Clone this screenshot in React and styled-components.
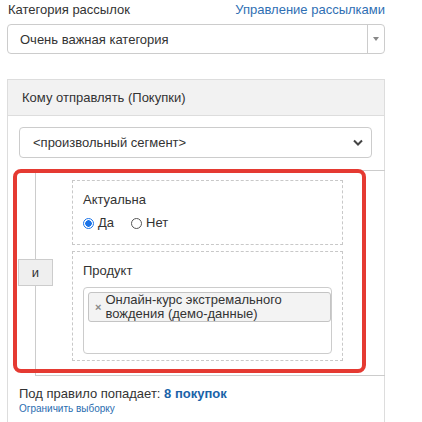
import styled, { createGlobalStyle } from 'styled-components';

const GlobalStyle = createGlobalStyle`
  body {
    margin: 0;
    background: #fff;
    font-family: "Liberation Sans", Arial, sans-serif;
    font-size: 13px;
    color: #333;
  }
`;

const Page = styled.div`
  width: 378px;
  padding-left: 7px;
  height: 422px;
  overflow: hidden;
`;

const TopRow = styled.div`
  display: flex;
  justify-content: space-between;
  align-items: center;
  height: 20px;
  padding-left: 1px;
  line-height: 20px;
`;

const Link = styled.a`
  display: ${(p) => (p.$small ? 'block' : 'inline')};
  line-height: ${(p) => (p.$small ? '13px' : 'inherit')};
  color: ${(p) => (p.$small ? '#2a6db0' : '#2f6fb3')};
  font-size: ${(p) => (p.$small ? '10px' : '13px')};
  text-decoration: none;
  cursor: pointer;
`;

const Select = styled.div`
  margin-top: 4px;
  height: 28px;
  display: flex;
  align-items: stretch;
  border: 1px solid #ccc;
  border-radius: 4px;
  .value {
    flex: 1;
    display: flex;
    align-items: center;
    padding-left: 12px;
  }
  .arrow {
    width: 16px;
    border-left: 1px solid #ccc;
    display: flex;
    align-items: center;
    justify-content: center;
  }
  .arrow::after {
    content: '';
    border-left: 3px solid transparent;
    border-right: 3px solid transparent;
    border-top: 4px solid #888;
  }
`;

const Panel = styled.div`
  margin-top: 25px;
  border: 1px solid #ddd;
  border-bottom: none;
`;

const PanelHeader = styled.div`
  height: 35px;
  display: flex;
  align-items: center;
  padding-left: 14px;
  background: #f2f2f2;
  border-bottom: 1px solid #ddd;
`;

const PanelBody = styled.div`
  padding: 11px 12px 20px 11px;
`;

const SegmentSelect = styled.div`
  height: 29px;
  display: flex;
  align-items: center;
  justify-content: space-between;
  padding: 0 8px 0 13px;
  border: 1px solid #ccc;
  border-radius: 4px;
`;

const RuleWrap = styled.div`
  position: relative;
  margin: 12px 0 0 16px;
  width: 380px;
`;

const RuleBox = styled.div`
  box-sizing: border-box;
  height: 206px;
  border: 1px solid #ccc;
  padding: 9px 71px 0 36px;
  display: flex;
  flex-direction: column;
  gap: 6px;
`;

const AndButton = styled.div`
  position: absolute;
  left: -17px;
  top: 89px;
  width: 33px;
  height: 25px;
  border: 1px solid #ccc;
  background: #efefef;
  display: flex;
  align-items: center;
  justify-content: center;
  font-size: 13px;
`;

const Highlight = styled.div`
  position: absolute;
  left: -22px;
  top: -1px;
  width: 353px;
  height: 204px;
  box-sizing: border-box;
  border: 4px solid #e53a32;
  border-radius: 8px;
  pointer-events: none;
`;

const Condition = styled.div`
  box-sizing: border-box;
  height: ${(p) => p.$h}px;
  border: 1px dashed #c8c8c8;
  padding: 11px 10px 0 10px;
`;

const Label = styled.div`
  line-height: 16px;
`;

const Radios = styled.div`
  display: flex;
  gap: 17px;
  margin-top: 7px;
`;

const RadioLabel = styled.label`
  display: flex;
  align-items: center;
  gap: 4px;
  font-size: 13px;
  line-height: 16px;
`;

const RadioDot = styled.span`
  box-sizing: border-box;
  width: 11px;
  height: 11px;
  border-radius: 50%;
  border: 1px solid ${(p) => (p.$checked ? '#1a73e8' : '#555')};
  background: ${(p) =>
    p.$checked ? 'radial-gradient(circle, #1a73e8 0 3px, #fff 3.5px)' : '#fff'};
`;

const MultiSelect = styled.div`
  box-sizing: border-box;
  height: 67px;
  margin-top: 8px;
  border: 1px solid #ccc;
  border-radius: 4px;
  padding: 4px 0 0 4px;
`;

const Tag = styled.div`
  box-sizing: border-box;
  width: 243px;
  height: 30px;
  display: flex;
  align-items: center;
  gap: 4px;
  padding-left: 6px;
  background: #f3f3f3;
  border: 1px solid #c4c4c4;
  border-radius: 3px;
  .x {
    color: #888;
    font-size: 11px;
    font-weight: bold;
  }
`;

const TagText = styled.div`
  display: flex;
  flex-direction: column;
  span {
    display: block;
    font-size: 13px;
    line-height: 14px;
    height: 14px;
  }
`;

const Summary = styled.div`
  margin-top: 10px;
  line-height: 16px;
  b {
    color: #1a62a8;
  }
`;

const Chevron = () => (
  <svg width="10" height="7" viewBox="0 0 10 7">
    <path d="M1 1.5 L5 5.5 L9 1.5" fill="none" stroke="#444" strokeWidth="2" />
  </svg>
);

const App = () => {
  return (
    <>
      <GlobalStyle />
      <Page>
        <TopRow>
          <span>Категория рассылок</span>
          <Link>Управление рассылками</Link>
        </TopRow>
        <Select>
          <div className="value">Очень важная категория</div>
          <div className="arrow" />
        </Select>

        <Panel>
          <PanelHeader>Кому отправлять (Покупки)</PanelHeader>
          <PanelBody>
            <SegmentSelect>
              <span>&lt;произвольный сегмент&gt;</span>
              <Chevron />
            </SegmentSelect>

            <RuleWrap>
              <RuleBox>
                <Condition $h={65}>
                  <Label>Актуальна</Label>
                  <Radios>
                    <RadioLabel>
                      <RadioDot $checked />
                      Да
                    </RadioLabel>
                    <RadioLabel>
                      <RadioDot />
                      Нет
                    </RadioLabel>
                  </Radios>
                </Condition>
                <Condition $h={110}>
                  <Label>Продукт</Label>
                  <MultiSelect>
                    <Tag>
                      <span className="x">×</span>
                      <TagText>
                        <span>Онлайн-курс экстремального</span>
                        <span>вождения (демо-данные)</span>
                      </TagText>
                    </Tag>
                  </MultiSelect>
                </Condition>
              </RuleBox>
              <AndButton>и</AndButton>
              <Highlight />
            </RuleWrap>

            <Summary>
              Под правило попадает: <b>8 покупок</b>
            </Summary>
            <Link $small>Ограничить выборку</Link>
          </PanelBody>
        </Panel>
      </Page>
    </>
  );
};

export default App;
